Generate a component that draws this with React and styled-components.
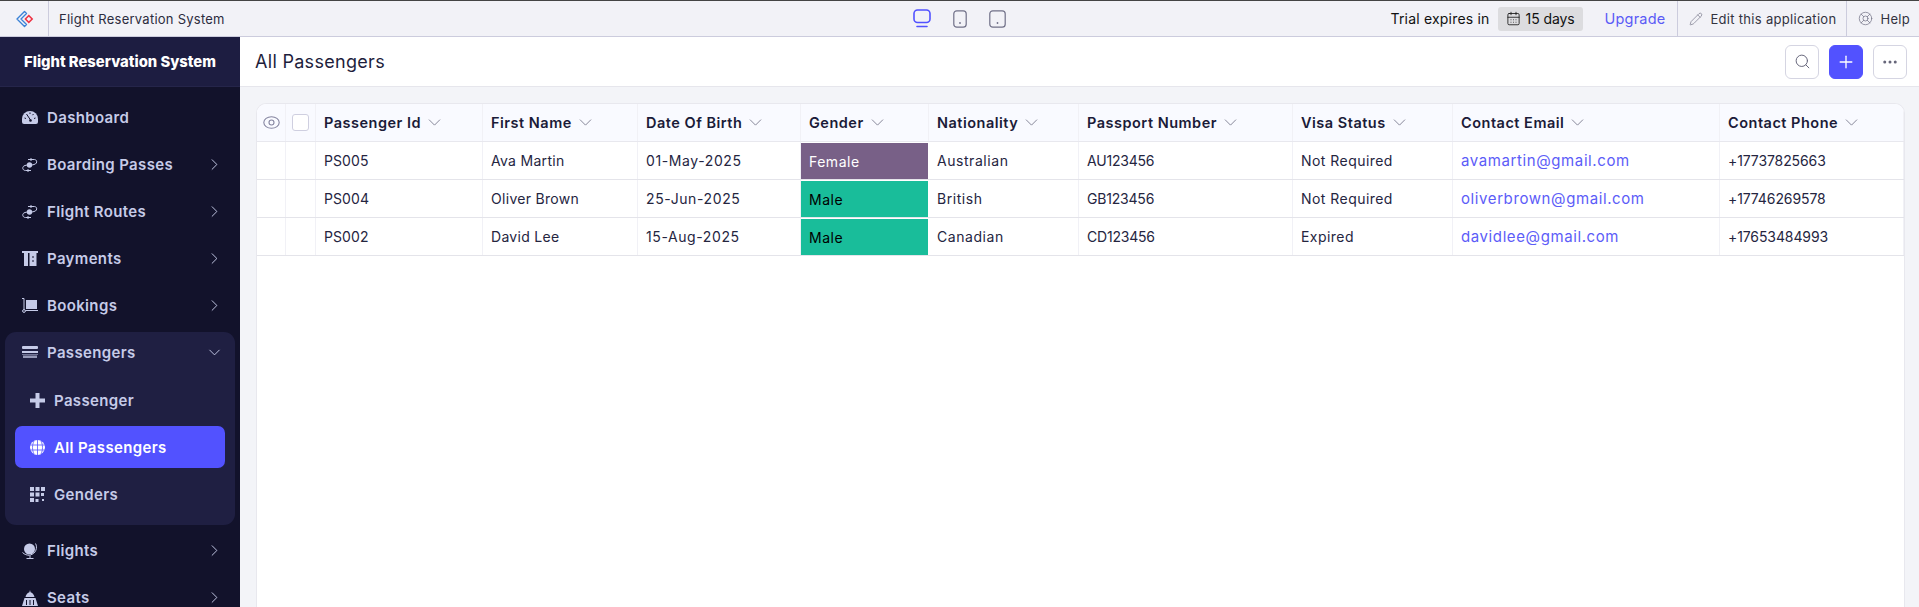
import React from 'react';
import styled, { createGlobalStyle } from 'styled-components';
import { ChevronRight, ChevronDown, Search, Plus, Ellipsis, Pencil, LifeBuoy, CalendarDays } from 'lucide-react';

const GlobalStyle = createGlobalStyle`
  html, body {
    margin: 0;
    height: 100%;
    overflow: hidden;
  }
  body {
    font-family: Inter, "Open Sans", "Liberation Sans", sans-serif;
    color: #1e1e3c;
  }
  #root {
    height: 100%;
  }
`;

const Page = styled.div`
  height: 100vh;
  display: flex;
  flex-direction: column;
`;

const TopBar = styled.header`
  height: 37px;
  box-sizing: border-box;
  flex: none;
  display: grid;
  grid-template-columns: 1fr auto 1fr;
  align-items: stretch;
  background: #f2f2f7;
  border-top: 1px solid #444;
  border-bottom: 1px solid #ccccdd;
`;

const TopLeft = styled.div`
  display: flex;
  align-items: center;
`;

const LogoBox = styled.div`
  width: 48px;
  height: 100%;
  display: flex;
  align-items: center;
  justify-content: center;
  border-right: 1px solid #ccccdd;
`;

const AppName = styled.span`
  margin-left: 10px;
  font-size: 13px;
  letter-spacing: 0.25px;
  color: #2c2c3e;
`;

const Devices = styled.div`
  display: flex;
  align-items: center;
  gap: 22px;
  margin-left: -1px;
`;

const TopRight = styled.div`
  display: flex;
  align-items: stretch;
  justify-content: flex-end;
`;

const Trial = styled.div`
  display: flex;
  align-items: center;
  font-size: 14px;
  letter-spacing: 0.2px;
  color: #111;
`;

const DaysBadge = styled.span`
  display: flex;
  align-items: center;
  gap: 5px;
  height: 24px;
  padding: 0 8px 0 8px;
  margin-left: 8px;
  border-radius: 3px;
  background: #dcdcdf;
  font-size: 14px;
  letter-spacing: -0.1px;
`;

const Upgrade = styled.a`
  margin: 0 12px 0 22px;
  align-self: center;
  font-size: 14.5px;
  letter-spacing: 0.2px;
  color: #5b5bf6;
`;

const TopAction = styled.div`
  display: flex;
  align-items: center;
  gap: ${(p) => p.$gap || 7}px;
  padding: 0 ${(p) => p.$right || 10}px 0 11px;
  border-left: 1px solid #ccccdd;
  font-size: 13px;
  letter-spacing: 0.3px;
  color: #33333f;
  svg {
    color: #77778a;
  }
`;

const Body = styled.div`
  flex: 1;
  min-height: 0;
  display: flex;
`;

const Sidebar = styled.aside`
  width: 240px;
  flex: none;
  background: #12122b;
  overflow: hidden;
`;

const Brand = styled.div`
  height: 50px;
  box-sizing: border-box;
  display: flex;
  align-items: center;
  justify-content: center;
  background: #1d1d41;
  border-bottom: 1px solid #25254a;
  font-size: 14.8px;
  font-weight: 800;
  color: #fff;
  padding-top: 1px;
`;

const Nav = styled.nav`
  padding-top: 7px;
  display: flex;
  flex-direction: column;
`;

const NavItem = styled.div`
  height: 47px;
  flex: none;
  display: flex;
  align-items: center;
  padding: 0 16px 0 22px;
  font-size: 15px;
  font-weight: 600;
  letter-spacing: 0.35px;
  color: #c6cbe8;
`;

const NavIcon = styled.span`
  width: 25px;
  display: flex;
  align-items: center;
  flex: none;
`;

const NavLabel = styled.span`
  flex: 1;
`;

const Group = styled.div`
  margin: 3px 5px 2px;
  padding-bottom: 5px;
  border-radius: 11px;
  background: #1f1f42;
  ${NavItem} {
    height: 40px;
    margin-bottom: 7px;
    padding: 0 11px 0 17px;
  }
`;

const SubItem = styled.div`
  height: 42px;
  margin: 0 10px 5px;
  padding: 0 0 0 15px;
  display: flex;
  align-items: center;
  border-radius: 7px;
  font-size: 15px;
  font-weight: 600;
  letter-spacing: 0.35px;
  color: ${(p) => (p.$active ? '#fff' : '#c6cbe8')};
  background: ${(p) => (p.$active ? '#5252ff' : 'transparent')};
  ${NavIcon} {
    width: 24px;
  }
`;

const Main = styled.main`
  flex: 1;
  min-width: 0;
  display: flex;
  flex-direction: column;
  background: #f3f4f8;
`;

const Header = styled.div`
  height: 50px;
  box-sizing: border-box;
  flex: none;
  display: flex;
  align-items: center;
  justify-content: space-between;
  padding: 0 12px 0 15px;
  background: #fff;
  border-bottom: 1px solid #e6e6ec;
`;

const Title = styled.h1`
  margin: 0;
  font-size: 18px;
  font-weight: 400;
  letter-spacing: 0.3px;
  color: #1e1e3c;
`;

const Actions = styled.div`
  display: flex;
  gap: 10px;
`;

const IconButton = styled.button`
  width: 34px;
  height: 34px;
  padding: 0;
  display: flex;
  align-items: center;
  justify-content: center;
  box-sizing: border-box;
  border-radius: 6px;
  border: 1px solid ${(p) => (p.$primary ? '#5252ff' : '#d5d5e2')};
  background: ${(p) => (p.$primary ? '#5252ff' : '#fff')};
  color: ${(p) => (p.$primary ? '#fff' : '#66667a')};
`;

const Content = styled.div`
  flex: 1;
  min-height: 0;
  padding: 16px 14px 0 16px;
  display: flex;
`;

const Card = styled.div`
  flex: 1;
  box-sizing: border-box;
  background: #fff;
  border: 1px solid #e8e8ee;
  border-bottom: 0;
  border-radius: 10px 10px 0 0;
  overflow: hidden;
`;

const columns = '29px 30px 167px 155px 163px 128px 150px 214px 160px 267px 1fr';

const HeadRow = styled.div`
  display: grid;
  grid-template-columns: ${columns};
  height: 38px;
  box-sizing: border-box;
  background: #f9faff;
  border-bottom: 1px solid #e8e8ee;
`;

const Row = styled.div`
  display: grid;
  grid-template-columns: ${columns};
  height: 38px;
  box-sizing: border-box;
  border-bottom: 1px solid #e4e4ea;
`;

const HeadCell = styled.div`
  display: flex;
  align-items: center;
  justify-content: ${(p) => (p.$center ? 'center' : 'flex-start')};
  gap: 3px;
  padding-left: ${(p) => (p.$center ? 0 : 8)}px;
  border-right: 1px solid #f1f1f6;
  font-size: 14.5px;
  font-weight: 600;
  letter-spacing: 0.5px;
  color: #1b1b38;
  svg {
    color: #77778a;
  }
`;

const Cell = styled.div`
  display: flex;
  align-items: center;
  padding-left: 8px;
  border-right: 1px solid #f1f1f6;
  font-size: 14px;
  letter-spacing: ${(p) => p.$spacing ?? 0.3}px;
  color: #25253f;
`;

const GenderCell = styled(Cell)`
  margin: 1px 1px 0 0;
  background: ${(p) => p.$bg};
  color: ${(p) => p.$fg};
  border-right: 0;
  letter-spacing: 0.5px;
`;

const EmailCell = styled(Cell)`
  font-size: 15px;
  letter-spacing: 0.6px;
  color: #5c5cf8;
`;

const Checkbox = styled.span`
  width: 15px;
  height: 15px;
  border: 1px solid #cfcfe0;
  border-radius: 3px;
  background: #fff;
`;

const Logo = () => (
  <svg width="20" height="20" viewBox="0 0 20 20" fill="none">
    <path d="M10.5 2.500 3 10l7.500 7.500 2-2L7 10l5.500-5.500z" stroke="#3b82d6" strokeWidth="1.4" strokeLinejoin="round" />
    <rect x="12.400" y="7.600" width="4.800" height="4.800" transform="rotate(45 14.800 10)" stroke="#ee3344" strokeWidth="1.500" />
  </svg>
);

const Monitor = () => (
  <svg width="18" height="19" viewBox="0 0 18 19" fill="none" stroke="#5252ff" strokeWidth="1.6">
    <rect x="1" y="1" width="16" height="12.500" rx="3.500" />
    <path d="M4 17.500h10" strokeLinecap="round" />
  </svg>
);

const Phone = ({ width }) => (
  <svg width={width} height="18" viewBox={`0 0 ${width} 18`} fill="none" stroke="#707088" strokeWidth="1.2">
    <rect x="0.800" y="0.800" width={width - 1.6} height="16.400" rx="3" />
    <circle cx={width / 2} cy="13" r="0.900" fill="#707088" stroke="none" />
  </svg>
);

const iconColor = '#c6cbe8';

const Gauge = () => (
  <svg width="16" height="13" viewBox="0 0 16 13" fill={iconColor}>
    <path d="M8 0a8 8 0 0 1 8 8v3a2 2 0 0 1-2 2H2a2 2 0 0 1-2-2V8a8 8 0 0 1 8-8z" />
    <path d="M4.500 3 8.500 9M2.500 7l1.500.5M13.500 7l-1.500.5M8 1.500V3M11.500 3 10.500 4.200" stroke="#12122b" strokeWidth="1" />
    <circle cx="8.500" cy="9.500" r="1.300" fill="#12122b" />
  </svg>
);

const RouteIcon = () => (
  <svg width="16" height="16" viewBox="0 0 16 16" fill="none" stroke={iconColor} strokeWidth="1">
    <circle cx="7.500" cy="8" r="2.700" fill={iconColor} stroke="none" />
    <path d="M6 2.500h6.500c3 .2 3 4.500-.5 5l-2 .5" />
    <path d="M5 8 3 8.500c-3.300.8-2.800 5 .5 5H9" />
    <path d="M8.500 1 10 2.500 8.500 4M6.500 12l-1.500 1.500L6.500 15" />
  </svg>
);

const Pillars = () => (
  <svg width="16" height="15" viewBox="0 0 16 15" fill={iconColor}>
    <rect x="0" y="0" width="16" height="2" />
    <rect x="2" y="2" width="4" height="13" />
    <rect x="7.500" y="2" width="7" height="13" />
    <rect x="10.500" y="5" width="1" height="2" fill="#12122b" />
    <rect x="10.500" y="9" width="1" height="2" fill="#12122b" />
  </svg>
);

const Trolley = () => (
  <svg width="16" height="15" viewBox="0 0 16 15" fill="none" stroke={iconColor}>
    <rect x="4" y="2" width="11" height="9" fill={iconColor} stroke="none" />
    <path d="M0 .5h2v11.500M3.500 12.500H16" />
    <circle cx="2" cy="13" r="1.400" />
  </svg>
);

const TicketStack = () => (
  <svg width="16" height="12" viewBox="0 0 16 12" fill={iconColor}>
    <rect x="0" y="0" width="16" height="3" rx="1" />
    <rect x="0" y="5" width="16" height="2" />
    <rect x="0" y="8" width="16" height="1" opacity="0.5" />
    <rect x="1" y="9.500" width="14" height="2.500" opacity="0.7" />
  </svg>
);

const PlusIcon = () => (
  <svg width="15" height="15" viewBox="0 0 15 15" fill={iconColor}>
    <path d="M5.500 0h4v5.500H15v4H9.500V15h-4V9.500H0v-4h5.500z" />
  </svg>
);

const GlobeIcon = () => (
  <svg width="15" height="15" viewBox="0 0 15 15" fill="none">
    <circle cx="7.500" cy="7.500" r="7.500" fill="#fff" />
    <path d="M0 5h15M0 10h15M7.500 0v15M4 1c-2 4-2 9 0 13M11 1c2 4 2 9 0 13" stroke="#5252ff" strokeWidth="0.8" />
  </svg>
);

const GridIcon = () => (
  <svg width="15" height="15" viewBox="0 0 15 15" fill={iconColor}>
    <rect x="0" y="0" width="4" height="4" />
    <rect x="5.500" y="0" width="4" height="4" />
    <rect x="11" y="0" width="4" height="4" />
    <rect x="0" y="5.500" width="4" height="4" />
    <rect x="5.500" y="5.500" width="4" height="4" />
    <rect x="11" y="6" width="3" height="3" />
    <rect x="0" y="11" width="4" height="4" />
    <rect x="5.500" y="12" width="3" height="3" />
    <rect x="12" y="12" width="2" height="2" />
  </svg>
);

const GlobeStand = () => (
  <svg width="16" height="16" viewBox="0 0 16 16" fill="none" stroke={iconColor}>
    <circle cx="7.500" cy="6" r="5.500" fill={iconColor} stroke="none" />
    <path d="M13.500 .5c2.500 4 0 10.500-5 11.300M.5 9.500c2 2 4.500 2.800 7 2.800M8 12v3M4.500 15.500h7" />
  </svg>
);

const Dome = () => (
  <svg width="16" height="16" viewBox="0 0 16 16" fill={iconColor}>
    <path d="M8 0l.6 2.200C11 3 12 5 12.500 7h-9C4 5 5 3 7.400 2.200z" />
    <path d="M2.500 8h11l2.500 8H0z" />
    <path d="M4.500 10v5M8 10v5M11.500 10v5" stroke="#12122b" strokeWidth="1" />
  </svg>
);

const Eye = () => (
  <svg width="17" height="13" viewBox="0 0 17 13" fill="none" stroke="#8585a0" strokeWidth="1.1">
    <ellipse cx="8.500" cy="6.500" rx="7.700" ry="5.800" />
    <circle cx="8.500" cy="6.500" r="2.500" />
  </svg>
);

const chevron = <ChevronRight size={19} strokeWidth={1.2} color="#c6cbe8" />;

const topItems = [
  { label: 'Dashboard', icon: <Gauge /> },
  { label: 'Boarding Passes', icon: <RouteIcon />, more: true },
  { label: 'Flight Routes', icon: <RouteIcon />, more: true },
  { label: 'Payments', icon: <Pillars />, more: true },
  { label: 'Bookings', icon: <Trolley />, more: true },
];

const headers = [
  'Passenger Id',
  'First Name',
  'Date Of Birth',
  'Gender',
  'Nationality',
  'Passport Number',
  'Visa Status',
  'Contact Email',
  'Contact Phone',
];

const rows = [
  ['PS005', 'Ava Martin', '01-May-2025', 'Female', 'Australian', 'AU123456', 'Not Required', 'avamartin@gmail.com', '+17737825663'],
  ['PS004', 'Oliver Brown', '25-Jun-2025', 'Male', 'British', 'GB123456', 'Not Required', 'oliverbrown@gmail.com', '+17746269578'],
  ['PS002', 'David Lee', '15-Aug-2025', 'Male', 'Canadian', 'CD123456', 'Expired', 'davidlee@gmail.com', '+17653484993'],
];

// letter spacing per column, to fit the measured text widths
const cellSpacing = [0.1, 0.3, 0.6, 0.5, 0.55, -0.2, 0.45, 0.6, -0.1];

const App = () => {
  return (
    <Page>
      <GlobalStyle />
      <TopBar>
        <TopLeft>
          <LogoBox>
            <Logo />
          </LogoBox>
          <AppName>Flight Reservation System</AppName>
        </TopLeft>
        <Devices>
          <Monitor />
          <Phone width={14} />
          <Phone width={17} />
        </Devices>
        <TopRight>
          <Trial>
            Trial expires in
            <DaysBadge>
              <CalendarDays size={15} strokeWidth={1.3} />
              15 days
            </DaysBadge>
          </Trial>
          <Upgrade>Upgrade</Upgrade>
          <TopAction>
            <Pencil size={14} strokeWidth={1.2} />
            Edit this application
          </TopAction>
          <TopAction $right={9}>
            <LifeBuoy size={15} strokeWidth={1.2} />
            Help
          </TopAction>
        </TopRight>
      </TopBar>
      <Body>
        <Sidebar>
          <Brand>Flight Reservation System</Brand>
          <Nav>
            {topItems.map((item) => (
              <NavItem key={item.label}>
                <NavIcon>{item.icon}</NavIcon>
                <NavLabel>{item.label}</NavLabel>
                {item.more && chevron}
              </NavItem>
            ))}
            <Group>
              <NavItem>
                <NavIcon><TicketStack /></NavIcon>
                <NavLabel>Passengers</NavLabel>
                <ChevronDown size={19} strokeWidth={1.2} color="#c6cbe8" />
              </NavItem>
              <SubItem>
                <NavIcon><PlusIcon /></NavIcon>
                Passenger
              </SubItem>
              <SubItem $active>
                <NavIcon><GlobeIcon /></NavIcon>
                All Passengers
              </SubItem>
              <SubItem>
                <NavIcon><GridIcon /></NavIcon>
                Genders
              </SubItem>
            </Group>
            <NavItem>
              <NavIcon><GlobeStand /></NavIcon>
              <NavLabel>Flights</NavLabel>
              {chevron}
            </NavItem>
            <NavItem>
              <NavIcon><Dome /></NavIcon>
              <NavLabel>Seats</NavLabel>
              {chevron}
            </NavItem>
          </Nav>
        </Sidebar>
        <Main>
          <Header>
            <Title>All Passengers</Title>
            <Actions>
              <IconButton><Search size={17} strokeWidth={1.4} /></IconButton>
              <IconButton $primary><Plus size={20} strokeWidth={1.6} /></IconButton>
              <IconButton><Ellipsis size={18} strokeWidth={2} /></IconButton>
            </Actions>
          </Header>
          <Content>
            <Card>
              <HeadRow>
                <HeadCell $center><Eye /></HeadCell>
                <HeadCell $center><Checkbox /></HeadCell>
                {headers.map((h) => (
                  <HeadCell key={h}>
                    {h}
                    <ChevronDown size={21} strokeWidth={1} />
                  </HeadCell>
                ))}
              </HeadRow>
              {rows.map((row) => (
                <Row key={row[0]}>
                  <Cell />
                  <Cell />
                  {row.map((value, i) => {
                    if (i === 3) {
                      const female = value === 'Female';
                      return (
                        <GenderCell key={i} $bg={female ? '#786087' : '#19bd9a'} $fg={female ? '#fff' : '#000'}>
                          {value}
                        </GenderCell>
                      );
                    }
                    if (i === 7) return <EmailCell key={i}>{value}</EmailCell>;
                    return <Cell key={i} $spacing={cellSpacing[i]}>{value}</Cell>;
                  })}
                </Row>
              ))}
            </Card>
          </Content>
        </Main>
      </Body>
    </Page>
  );
};

export default App;
